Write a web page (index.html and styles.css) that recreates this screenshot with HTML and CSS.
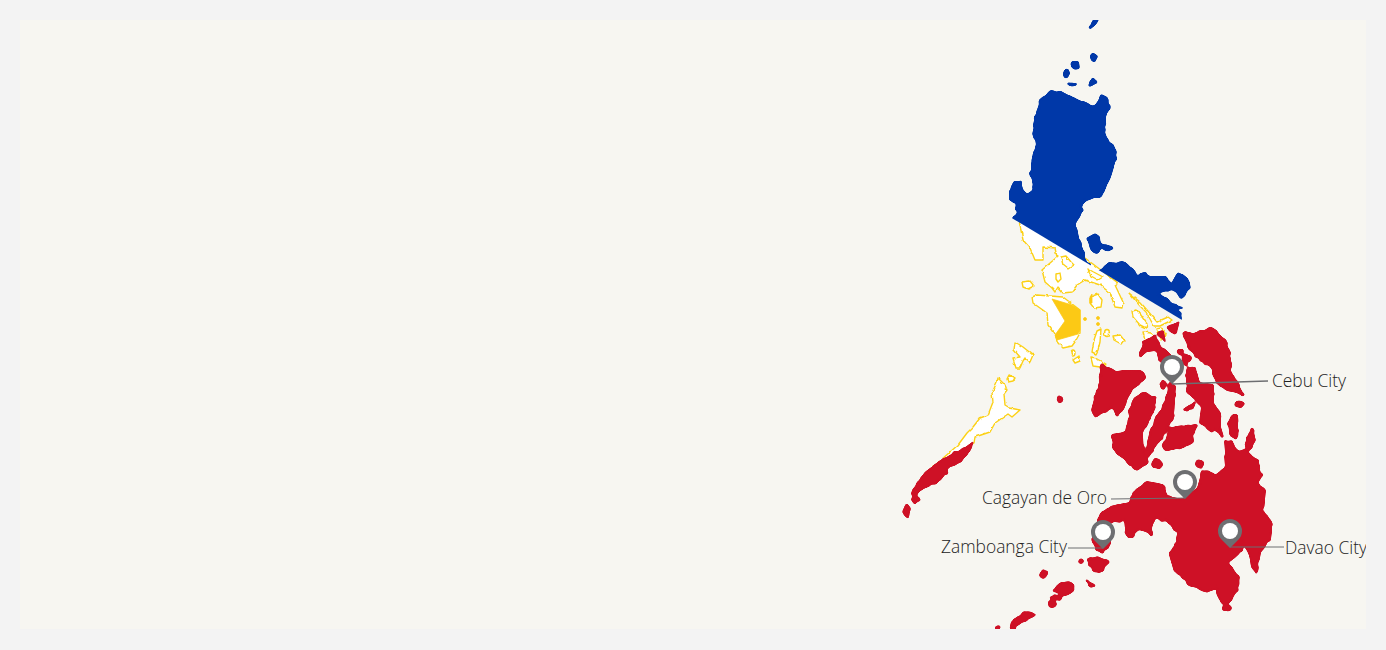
FILE: index.html
```html
<!DOCTYPE html>
<html lang="en">
<head>
    <meta charset="UTF-8">
    <meta name="viewport" content="width=device-width, initial-scale=1.0">
    <title>Philippines</title>
    <link rel="stylesheet" href="styles.css">
</head>
<body>
    <div class="map-panel">
        <svg class="map" viewBox="20 20 1346 609" role="img" aria-label="Map of the Philippines">
            <defs>
                <g id="pin">
                    <path class="pin-body" d="M0 17 L-8.5 8.5 A12 12 0 1 1 8.5 8.5 Z"/>
                    <circle class="pin-hole" r="8"/>
                </g>
                <!-- roughens the coast lines, then rounds the corners -->
                <filter id="coast" x="-5%" y="-5%" width="110%" height="110%" color-interpolation-filters="sRGB">
                    <feTurbulence type="fractalNoise" baseFrequency="0.14" numOctaves="2" seed="4" result="noise"/>
                    <feDisplacementMap in="SourceGraphic" in2="noise" scale="4" xChannelSelector="R" yChannelSelector="G"/>
                    <feGaussianBlur stdDeviation="1.3"/>
                    <feComponentTransfer>
                        <feFuncA type="linear" slope="5" intercept="-2"/>
                    </feComponentTransfer>
                </filter>
                <filter id="coast-line" x="-5%" y="-5%" width="110%" height="110%" color-interpolation-filters="sRGB">
                    <feTurbulence type="fractalNoise" baseFrequency="0.16" numOctaves="2" seed="7" result="noise"/>
                    <feDisplacementMap in="SourceGraphic" in2="noise" scale="3" xChannelSelector="R" yChannelSelector="G"/>
                    <feGaussianBlur stdDeviation="0.35"/>
                </filter>
                <!-- upper band of the flag, its edge is the straight diagonal -->
                <clipPath id="upper-band">
                    <polygon points="900,151 1015,220 1182,320 1386,442 1386,0 900,0"/>
                </clipPath>
            </defs>

            <!-- white triangle of the flag -->
            <g class="land-white">
                <path d="M1018 216 L1023 240 L1030 248 L1035 260 L1043 260 L1043 247 L1055 248 L1057 257 L1042 270 L1045 282 L1052 288 L1055 292 L1058 287 L1063 293 L1072 292 L1077 285 L1085 280 L1100 285 L1110 293 L1115 307 L1122 308 L1123 302 L1115 285 L1118 283 L1085 258 Z"/>
                <path d="M1061 257 L1066 256 L1071 262 L1074 265 L1068 269 L1063 265 Z"/>
                <path d="M1056 274 L1060 273 L1061 279 L1058 282 L1056 279 Z"/>
                <path d="M1088 269 L1103 277 L1098 280 L1091 276 Z"/>
                <path d="M1022 282 L1030 281 L1034 286 L1028 289 L1023 287 Z"/>
                <path d="M1032 297 L1037 295 L1063 297 L1080 310 L1080 333 L1075 342 L1072 346 L1063 348 L1058 343 L1055 335 L1048 325 L1047 313 L1033 303 Z"/>
                <path d="M1090 297 L1098 294 L1102 300 L1101 307 L1094 308 L1090 303 Z"/>
                <path d="M1097 331 L1101 329 L1100 342 L1098 350 L1096 354 L1092 352 L1094 340 Z"/>
                <ellipse cx="1107" cy="333" rx="2.5" ry="3.5"/>
                <path d="M1113 336 L1120 335 L1124 340 L1121 344 L1114 340 Z"/>
                <ellipse cx="1073" cy="353" rx="2" ry="3"/>
                <path d="M1073 360 L1079 356 L1080 361 L1075 363 Z"/>
                <path d="M1091 358 L1097 359 L1106 364 L1100 367 L1093 366 Z"/>
                <path d="M1132 311 L1137 310 L1147 324 L1146 328 L1140 325 L1133 317 Z"/>
                <path d="M1129 293 L1140 302 L1147 310 L1157 322 L1168 317 L1172 320 L1160 326 L1154 326 L1146 312 L1140 306 Z"/>
                <path d="M1143 332 L1151 333 L1155 336 L1145 341 Z"/>
                <path d="M1157 329 L1161 328 L1166 335 L1161 340 Z"/>
                <path d="M1015 342 L1023 347 L1033 355 L1030 362 L1025 358 L1023 361 L1020 368 L1016 368 L1013 358 L1020 357 L1014 350 Z"/>
                <path d="M1009 375 L1015 378 L1013 381 L1008 382 L1007 379 Z"/>
                <path d="M998 378 L1005 385 L1007 390 L1004 394 L1005 405 L1010 408 L1020 410 L1012 417 L1008 414 L995 423 L990 432 L975 437 L974 443 L933 467 L958 445 L967 433 L973 427 L980 418 L988 415 L993 402 L992 393 L997 382 Z"/>
            </g>

            <path class="land-sun" d="M1052 299 L1072 305 L1080 310 L1080 330 L1078 334 L1057 340 L1055 335 L1065 321 Z"/>
            <g class="land-sun">
                <circle cx="1085" cy="319" r="1.5"/>
                <circle cx="1098" cy="318" r="1.5"/>
                <circle cx="1098" cy="324" r="1.5"/>
                <path d="M1090 297 L1092 294 L1092 303 L1090 303 Z"/>
            </g>

            <g clip-path="url(#upper-band)">
                <g class="land-blue">
                    <path d="M1042 97 L1050 92 L1063 93 L1072 98 L1093 107 L1099 102 L1101 95 L1107 98 L1110 107 L1105 115 L1104 132 L1108 143 L1113 145 L1117 153 L1113 167 L1110 177 L1105 187 L1100 197 L1095 197 L1085 200 L1080 207 L1083 210 L1075 223 L1078 237 L1083 252 L1086 266 L1040 245 L1012 224 L1017 212 L1016 203 L1010 201 L1010 190 L1013 182 L1020 182 L1023 192 L1027 195 L1034 190 L1030 173 L1032 167 L1037 143 L1032 135 L1035 120 Z"/>
                    <path d="M1089 27 L1094 20 L1098 19 L1095 25 L1090 28 Z"/>
                    <ellipse cx="1094" cy="57" rx="3" ry="3"/>
                    <path d="M1071 63 L1078 62 L1079 68 L1076 69 L1072 66 Z"/>
                    <ellipse cx="1066" cy="74" rx="2" ry="3.5"/>
                    <ellipse cx="1072" cy="84" rx="4.5" ry="1.5"/>
                    <path d="M1090 83 L1093 78 L1097 81 L1092 85 L1089 86 Z"/>
                    <path d="M1088 238 L1095 234 L1099 237 L1100 243 L1113 248 L1108 252 L1102 247 L1095 253 L1091 249 Z"/>
                    <path d="M1098 272 L1108 264 L1123 262 L1133 269 L1138 278 L1143 273 L1153 277 L1167 277 L1172 288 L1163 291 L1157 294 L1167 300 L1173 305 L1182 308 L1173 309 L1182 313 L1180 324 L1140 300 Z"/>
                    <path d="M1178 273 L1187 278 L1190 288 L1182 297 L1173 290 L1173 282 Z"/>
                    <circle cx="1088" cy="265" r="1.5"/>
                </g>
            </g>

            <g class="land-red">
                <!-- palawan -->
                <path d="M974 442 L967 455 L960 462 L948 467 L947 473 L935 483 L920 490 L915 495 L920 500 L915 504 L912 500 L912 493 L917 483 L930 468 L948 457 Z"/>
                <path d="M907 503 L910 512 L907 518 L903 512 Z"/>
                <!-- visayas -->
                <path d="M1102 365 L1117 372 L1130 370 L1143 372 L1145 378 L1133 388 L1127 398 L1123 410 L1117 415 L1113 408 L1095 417 L1092 410 L1098 388 Z"/>
                <path d="M1142 393 L1155 397 L1155 407 L1147 423 L1142 435 L1143 452 L1148 462 L1137 470 L1128 463 L1113 448 L1112 435 L1127 432 L1130 410 L1133 400 Z"/>
                <path d="M1170 383 L1175 387 L1173 417 L1160 440 L1148 457 L1145 453 L1152 427 L1167 398 Z"/>
                <ellipse cx="1163" cy="385" rx="3" ry="4"/>
                <path d="M1170 428 L1183 426 L1197 425 L1192 435 L1193 442 L1180 448 L1165 450 L1163 445 L1167 435 Z"/>
                <path d="M1187 367 L1195 368 L1199 383 L1213 385 L1213 403 L1220 413 L1220 427 L1223 437 L1215 428 L1212 432 L1200 423 L1202 407 L1197 400 L1187 392 Z"/>
                <path d="M1182 333 L1197 333 L1212 328 L1227 343 L1230 353 L1230 370 L1243 395 L1237 392 L1227 390 L1217 383 L1210 365 L1203 363 L1193 353 Z"/>
                <path d="M1140 357 L1143 342 L1155 336 L1160 345 L1172 357 L1180 370 L1165 368 L1155 350 L1148 351 Z"/>
                <path d="M1167 328 L1179 322 L1175 335 Z"/>
                <path d="M1157 333 L1163 332 L1165 342 Z"/>
                <circle cx="1180" cy="352" r="2.5"/>
                <circle cx="1185" cy="358" r="2.5"/>
                <circle cx="1189" cy="358" r="2"/>
                <circle cx="1185" cy="363" r="2"/>
                <ellipse cx="1239" cy="404" rx="4" ry="2.5"/>
                <path d="M1183 410 L1195 402 L1193 408 L1186 411 Z"/>
                <path d="M1233 415 L1237 415 L1238 430 L1236 440 L1230 433 L1229 422 Z"/>
                <path d="M1252 428 L1255 440 L1248 452 L1245 443 Z"/>
                <ellipse cx="1157" cy="464" rx="5" ry="4.5"/>
                <ellipse cx="1200" cy="464" rx="3.5" ry="3.5"/>
                <ellipse cx="1060" cy="400" rx="2.5" ry="3"/>
                <!-- mindanao -->
                <path d="M1100 515 L1110 507 L1130 503 L1133 492 L1148 482 L1163 485 L1168 497 L1183 500 L1198 488 L1203 470 L1215 475 L1227 467 L1225 440 L1232 442 L1237 452 L1245 450 L1257 460 L1262 475 L1257 483 L1265 490 L1263 512 L1272 523 L1270 540 L1260 552 L1257 573 L1252 567 L1250 555 L1243 540 L1237 540 L1240 552 L1228 563 L1238 577 L1237 590 L1228 603 L1222 603 L1217 592 L1218 585 L1208 592 L1190 585 L1175 572 L1170 555 L1177 540 L1178 532 L1168 522 L1155 517 L1152 527 L1152 535 L1145 532 L1138 528 L1133 537 L1127 537 L1125 520 L1108 523 L1110 540 L1108 547 L1103 552 L1097 550 L1092 540 L1096 525 Z"/>
                <path d="M1088 560 L1097 557 L1108 562 L1100 572 L1092 570 Z"/>
                <circle cx="1081" cy="561" r="2"/>
                <path d="M1086 581 L1094 585 L1090 587 Z"/>
                <ellipse cx="1227" cy="608" rx="4" ry="2.5"/>
                <path d="M1238 541 L1243 543 L1242 551 L1238 552 Z"/>
                <!-- sulu -->
                <path d="M1039 576 L1043 570 L1048 572 L1043 578 Z"/>
                <path d="M1053 590 L1062 582 L1075 585 L1072 592 L1065 595 L1055 591 Z"/>
                <path d="M1050 597 L1055 595 L1057 598 L1052 600 Z"/>
                <ellipse cx="1059" cy="598" rx="2.5" ry="2"/>
                <ellipse cx="1052" cy="604" rx="4" ry="3"/>
                <path d="M1010 623 L1025 612 L1035 615 L1027 620 L1014 625 Z"/>
                <ellipse cx="1013" cy="628" rx="2.5" ry="2"/>
                <ellipse cx="998" cy="628" rx="2" ry="2"/>
            </g>

            <line class="leader leader-thick" x1="1172" y1="384" x2="1268" y2="381"/>
            <line class="leader" x1="1111" y1="499" x2="1185" y2="498"/>
            <line class="leader" x1="1068" y1="548" x2="1103" y2="548"/>
            <line class="leader" x1="1230" y1="547" x2="1284" y2="547"/>

            <use href="#pin" x="1172" y="367"/>
            <use href="#pin" x="1185" y="482"/>
            <use href="#pin" x="1103" y="532"/>
            <use href="#pin" x="1230" y="531"/>

            <text class="city" x="1272" y="387">Cebu City</text>
            <text class="city" x="982" y="504">Cagayan de Oro</text>
            <text class="city" x="941" y="553">Zamboanga City</text>
            <text class="city" x="1285" y="554">Davao City</text>
        </svg>
    </div>
</body>
</html>
```

FILE: styles.css
```css
* {
    margin: 0;
    padding: 0;
    box-sizing: border-box;
}

html, body {
    height: 100%;
    overflow: hidden;
}

body {
    background: #f3f3f3;
    padding: 20px 20px 21px;
    font-family: "Open Sans", sans-serif;
}

.map-panel {
    height: 609px;
    background: #f7f6f1;
}

.map {
    display: block;
    width: 100%;
    height: 100%;
}

.land-blue {
    fill: #0038a8;
    stroke: #0038a8;
    stroke-width: 2;
    stroke-linejoin: round;
    filter: url(#coast);
}

.land-red {
    fill: #ce1126;
    stroke: #ce1126;
    stroke-width: 2;
    stroke-linejoin: round;
    filter: url(#coast);
}

.land-white {
    fill: #fff;
    stroke: #fcd116;
    stroke-width: 1.4;
    stroke-linejoin: round;
    filter: url(#coast-line);
}

.land-sun {
    fill: #fcc915;
    stroke: #fcc915;
    stroke-width: 0.8;
    stroke-linejoin: round;
}

.pin-body {
    fill: #6d6e71;
}

.pin-hole {
    fill: #fff;
}

.leader {
    stroke: #6d6e71;
    stroke-width: 1;
}

.leader-thick {
    stroke-width: 1.5;
}

.city {
    font-size: 17.4px;
    font-weight: 300;
    fill: #222;
}
```
